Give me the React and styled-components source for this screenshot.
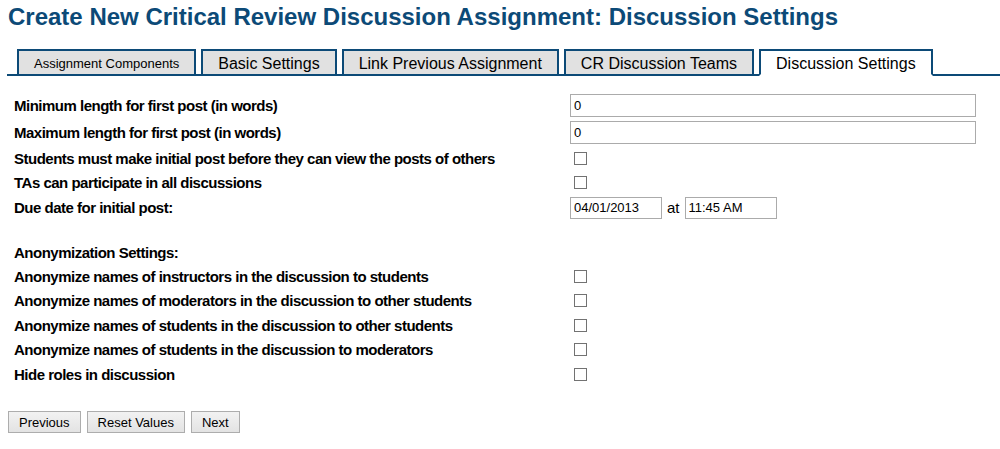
import React from "react";
import styled, { createGlobalStyle } from "styled-components";

const Global = createGlobalStyle`
  html, body { margin: 0; padding: 0; background: #fff; }
  body { font-family: "Liberation Sans", Arial, sans-serif; color: #000; }
`;

const BLUE = "#0c4a77";

const Page = styled.div`
  width: 1000px;
  padding-top: 3px;
`;

const Title = styled.h1`
  margin: 0 0 0 8px;
  font-size: 24px;
  line-height: 28px;
  font-weight: bold;
  color: ${BLUE};
  white-space: nowrap;
`;

const TabBar = styled.div`
  display: flex;
  align-items: flex-end;
  gap: 5px;
  margin: 18px 0 0 7px;
  padding-left: 10px;
  border-bottom: 2px solid ${BLUE};
`;

const Tab = styled.div`
  box-sizing: content-box;
  height: 21px;
  padding: 2px 15px 0;
  margin-bottom: -2px;
  border: 2px solid ${BLUE};
  border-bottom-color: ${(p) => (p.$active ? "#fff" : BLUE)};
  background: ${(p) => (p.$active ? "#fff" : "#e1e1e1")};
  font-size: ${(p) => (p.$small ? "13px" : "16px")};
  line-height: 21px;
  white-space: nowrap;
  color: #000;
`;

const Form = styled.div`
  margin-top: 16px;
  padding-left: 14px;
`;

const Row = styled.div`
  display: grid;
  grid-template-columns: 556px auto;
  align-items: center;
  height: ${(p) => p.$h}px;
`;

const Label = styled.div`
  font-size: 15px;
  letter-spacing: -0.5px;
  font-weight: bold;
  white-space: nowrap;
`;

const Value = styled.div`
  display: flex;
  align-items: center;
`;

const TextInput = styled.input`
  box-sizing: border-box;
  width: ${(p) => p.$w}px;
  height: ${(p) => p.$hh || 23}px;
  margin: 0;
  padding: 1px 3px;
  border: 1px solid #ababab;
  background: #fff;
  font-family: "Liberation Sans", Arial, sans-serif;
  font-size: 13px;
  color: #000;
  outline: none;
`;

const Check = styled.input.attrs({ type: "checkbox" })`
  appearance: none;
  -webkit-appearance: none;
  box-sizing: border-box;
  width: 13px;
  height: 13px;
  margin: 0 0 0 4px;
  border: 1px solid #727272;
  background: #fff;
  border-radius: 0;
`;

const At = styled.span`
  font-size: 15px;
  margin: 0 5px;
`;

const Buttons = styled.div`
  display: flex;
  gap: 6px;
  margin: 24.5px 0 0 8px;
`;

const Button = styled.button`
  box-sizing: border-box;
  height: 22px;
  padding: 0 10px;
  border: 1px solid #adadad;
  background: linear-gradient(#f2f2f2, #e3e3e3);
  font-family: "Liberation Sans", Arial, sans-serif;
  font-size: 13px;
  color: #000;
  border-radius: 0;
`;

const tabs = [
  { label: "Assignment Components", small: true },
  { label: "Basic Settings" },
  { label: "Link Previous Assignment" },
  { label: "CR Discussion Teams" },
  { label: "Discussion Settings", active: true },
];

const anon = [
  "Anonymize names of instructors in the discussion to students",
  "Anonymize names of moderators in the discussion to other students",
  "Anonymize names of students in the discussion to other students",
  "Anonymize names of students in the discussion to moderators",
  "Hide roles in discussion",
];

export default function App() {
  return (
    <Page>
      <Global />
      <Title>Create New Critical Review Discussion Assignment: Discussion Settings</Title>
      <TabBar>
        {tabs.map((t) => (
          <Tab key={t.label} $small={t.small} $active={t.active}>
            {t.label}
          </Tab>
        ))}
      </TabBar>
      <Form>
        <Row $h={27}>
          <Label>Minimum length for first post (in words)</Label>
          <Value><TextInput $w={406} defaultValue="0" /></Value>
        </Row>
        <Row $h={27}>
          <Label>Maximum length for first post (in words)</Label>
          <Value><TextInput $w={406} defaultValue="0" /></Value>
        </Row>
        <Row $h={24}>
          <Label>Students must make initial post before they can view the posts of others</Label>
          <Value><Check /></Value>
        </Row>
        <Row $h={24}>
          <Label>TAs can participate in all discussions</Label>
          <Value><Check /></Value>
        </Row>
        <Row $h={27}>
          <Label>Due date for initial post:</Label>
          <Value>
            <TextInput $w={92} $hh={22} defaultValue="04/01/2013" />
            <At>at</At>
            <TextInput $w={92} $hh={22} defaultValue="11:45 AM" />
          </Value>
        </Row>
        <Row $h={19} />
        <Row $h={24}>
          <Label>Anonymization Settings:</Label>
        </Row>
        {anon.map((a) => (
          <Row key={a} $h={24.5}>
            <Label>{a}</Label>
            <Value><Check /></Value>
          </Row>
        ))}
      </Form>
      <Buttons>
        <Button>Previous</Button>
        <Button>Reset Values</Button>
        <Button>Next</Button>
      </Buttons>
    </Page>
  );
}
